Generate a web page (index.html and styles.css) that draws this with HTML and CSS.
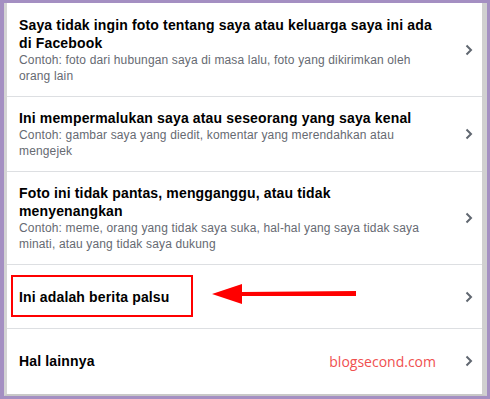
FILE: index.html
```html
<!DOCTYPE html>
<html lang="id">
<head>
    <meta charset="UTF-8">
    <title>Laporkan foto</title>
    <link rel="stylesheet" href="styles.css">
</head>
<body>
    <div class="frame">
        <div class="panel">
            <div class="option">
                <div class="option-text">
                    <div class="option-title">Saya tidak ingin foto tentang saya atau keluarga saya ini ada di Facebook</div>
                    <div class="option-desc">Contoh: foto dari hubungan saya di masa lalu, foto yang dikirimkan oleh orang lain</div>
                </div>
                <svg class="chevron" width="8" height="12" viewBox="0 0 8 12"><path d="M1.5 1.5 L6 6 L1.5 10.5" fill="none" stroke="#606770" stroke-width="2"/></svg>
            </div>
            <div class="option">
                <div class="option-text">
                    <div class="option-title">Ini mempermalukan saya atau seseorang yang saya kenal</div>
                    <div class="option-desc">Contoh: gambar saya yang diedit, komentar yang merendahkan atau mengejek</div>
                </div>
                <svg class="chevron" width="8" height="12" viewBox="0 0 8 12"><path d="M1.5 1.5 L6 6 L1.5 10.5" fill="none" stroke="#606770" stroke-width="2"/></svg>
            </div>
            <div class="option">
                <div class="option-text">
                    <div class="option-title title-narrow">Foto ini tidak pantas, mengganggu, atau tidak menyenangkan</div>
                    <div class="option-desc">Contoh: meme, orang yang tidak saya suka, hal-hal yang saya tidak saya minati, atau yang tidak saya dukung</div>
                </div>
                <svg class="chevron" width="8" height="12" viewBox="0 0 8 12"><path d="M1.5 1.5 L6 6 L1.5 10.5" fill="none" stroke="#606770" stroke-width="2"/></svg>
            </div>
            <div class="option option-short">
                <div class="option-text">
                    <div class="option-title">Ini adalah berita palsu</div>
                </div>
                <!-- annotation over the screenshot -->
                <div class="mark-box"></div>
                <svg class="mark-arrow" width="146" height="22" viewBox="0 0 146 22"><path d="M0 11 L30 1 L30 9 L144 8 L144 13 L30 13 L30 21 Z" fill="#ff0000"/></svg>
                <svg class="chevron" width="8" height="12" viewBox="0 0 8 12"><path d="M1.5 1.5 L6 6 L1.5 10.5" fill="none" stroke="#606770" stroke-width="2"/></svg>
            </div>
            <div class="option option-short">
                <div class="option-text">
                    <div class="option-title">Hal lainnya</div>
                </div>
                <span class="watermark">blogsecond.com</span>
                <svg class="chevron" width="8" height="12" viewBox="0 0 8 12"><path d="M1.5 1.5 L6 6 L1.5 10.5" fill="none" stroke="#606770" stroke-width="2"/></svg>
            </div>
        </div>
    </div>
</body>
</html>
```

FILE: styles.css
```css
html, body {
    margin: 0;
    height: 100%;
}
body {
    background-color: #a48fc2;
    font-family: "Liberation Sans", Arial, sans-serif;
}
.frame {
    box-sizing: border-box;
    height: 399px;
    padding: 3px 3px 3px 4px;
}
.panel {
    box-sizing: border-box;
    height: 100%;
    background-color: #fff;
    border-left: 3px solid #d4d4d4;
    border-right: 5px solid #d0d0d0;
    border-bottom: 2px solid #c8c8c8;
}
.option {
    position: relative;
    display: flex;
    align-items: center;
    min-height: 64px;
    padding: 12px 9px 12px 12px;
    box-sizing: border-box;
    border-bottom: 1px solid #dddfe2;
}
.option:first-child {
    padding-top: 13px;
}
.option:last-child {
    border-bottom: none;
}
.option-text {
    flex-grow: 1;
}
.option-title,
.option-desc {
    width: 422px;
}
.option-title {
    font-size: 14px;
    font-weight: bold;
    line-height: 18px;
    letter-spacing: 0.15px;
    color: #000;
}
.option-title.title-narrow {
    width: 400px;
}
.option-desc {
    font-size: 12px;
    line-height: 16px;
    letter-spacing: 0.15px;
    color: #666a72;
}
.option-short .option-title {
    width: auto;
}
.chevron {
    flex-shrink: 0;
}
.mark-box {
    position: absolute;
    left: 4px;
    top: 10px;
    width: 178px;
    height: 38px;
    border: 2px solid #ff0000;
}
.mark-arrow {
    position: absolute;
    left: 205px;
    top: 18px;
}
.watermark {
    font-family: "Open Sans", sans-serif;
    font-size: 14px;
    color: #f05050;
    margin-right: 29px;
}
```
